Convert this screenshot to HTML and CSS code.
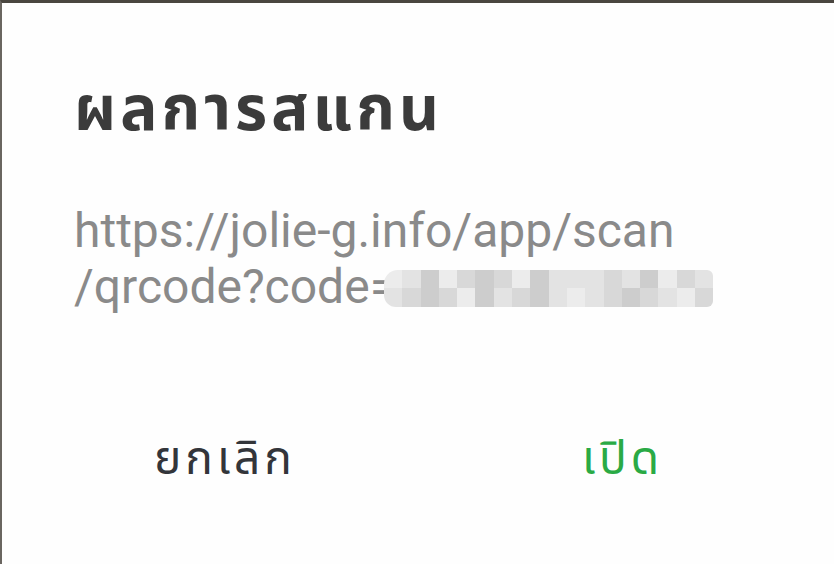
FILE: index.html
```html
<!DOCTYPE html>
<html lang="th">
<head>
<meta charset="utf-8">
<link rel="stylesheet" href="styles.css">
</head>
<body>
<div class="dialog">
  <h1 class="title">ผลการสแกน</h1>
  <div class="url">
    <div class="line">https://jolie-g.info/app/scan</div>
    <div class="line">/qrcode?code=<span class="blur">
      <span class="row">
        <i class="c4"></i><i class="c1"></i><i class="c3"></i><i class="c4"></i><i class="c2"></i><i class="c3"></i><i class="c2"></i><i class="c4"></i><i class="c3"></i><i class="c1"></i><i class="c1"></i><i class="c1"></i><i class="c2"></i><i class="c1"></i><i class="c3"></i><i class="c4"></i><i class="c2"></i><i class="c1"></i>
      </span>
      <span class="row">
        <i class="c1"></i><i class="c2"></i><i class="c3"></i><i class="c2"></i><i class="c4"></i><i class="c3"></i><i class="c1"></i><i class="c2"></i><i class="c3"></i><i class="c1"></i><i class="c4"></i><i class="c1"></i><i class="c2"></i><i class="c3"></i><i class="c2"></i><i class="c1"></i><i class="c4"></i><i class="c2"></i>
      </span>
    </span></div>
  </div>
  <div class="actions">
    <button class="btn cancel">ยกเลิก</button>
    <button class="btn open">เปิด</button>
  </div>
</div>
</body>
</html>
```
FILE: styles.css
```css
html, body {
  margin: 0;
  padding: 0;
  background: #fefefe;
}
.dialog {
  width: 834px;
  height: 564px;
  box-sizing: border-box;
  border-top: 3px solid #4a4640;
  border-left: 2px solid #6a6660;
  background: #fefefe;
  padding: 68px 0 0 72px;
}
.title {
  margin: 0;
  font-family: "Noto Sans Thai", "Noto Sans", "Liberation Sans", sans-serif;
  font-weight: 700;
  font-size: 62px;
  line-height: 80px;
  letter-spacing: 4px;
  color: #3b3b3b;
}
.url {
  margin-top: 52px;
  font-family: Roboto, sans-serif;
  font-size: 48px;
  line-height: 56px;
  color: #8a8a8a;
}
.line {
  white-space: nowrap;
}
.blur {
  display: inline-flex;
  flex-direction: column;
  vertical-align: 15px;
  margin-left: -12px;
  border-radius: 14px 6px 6px 12px;
  overflow: hidden;
}
.row {
  display: flex;
  height: 18.5px;
}
.row i {
  display: block;
  width: 18.3px;
  height: 18.5px;
}
.c1 { background: #e3e3e3; }
.c2 { background: #d8d8d8; }
.c3 { background: #cdcdcd; }
.c4 { background: #ececec; }
.actions {
  display: flex;
  margin-top: 117px;
  margin-left: 80px;
}
.btn {
  border: 0;
  background: none;
  padding: 0;
  font-family: "Noto Sans Thai", "Noto Sans", "Liberation Sans", sans-serif;
  font-size: 46px;
  line-height: 56px;
  letter-spacing: 4px;
}
.cancel {
  color: #33353a;
}
.open {
  color: #2aaa45;
  margin-left: 286px;
}
```
